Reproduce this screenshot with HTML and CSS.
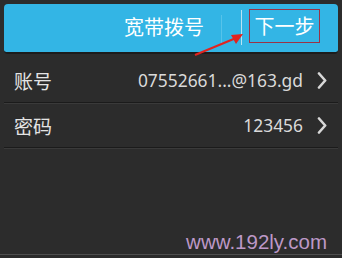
FILE: index.html
```html
<!DOCTYPE html>
<html lang="zh-CN">
<head>
<meta charset="utf-8">
<title>宽带拨号</title>
<link rel="stylesheet" href="styles.css">
</head>
<body>
<div class="screen">
  <header class="bar">
    <span class="title">宽带拨号</span>
    <span class="sep sep-faint"></span>
    <span class="sep sep-bright"></span>
    <span class="next">下一步</span>
  </header>
  <ul class="list">
    <li class="row">
      <span class="label">账号</span>
      <span class="value">07552661...@163.gd</span>
      <svg class="chev" width="10" height="17" viewBox="0 0 10 17"><path d="M2 1.5 L8.2 8.5 L2 15.5" fill="none" stroke="#d8d8d8" stroke-width="2.6" stroke-linecap="round" stroke-linejoin="round"/></svg>
    </li>
    <li class="row">
      <span class="label">密码</span>
      <span class="value">123456</span>
      <svg class="chev" width="10" height="17" viewBox="0 0 10 17"><path d="M2 1.5 L8.2 8.5 L2 15.5" fill="none" stroke="#d8d8d8" stroke-width="2.6" stroke-linecap="round" stroke-linejoin="round"/></svg>
    </li>
  </ul>
  <svg class="arrow" width="342" height="258" viewBox="0 0 342 258">
    <line x1="195" y1="55" x2="236" y2="38" stroke="#e2231f" stroke-width="2"/>
    <polygon points="243,34 231,35 236,44" fill="#e2231f"/>
  </svg>
  <div class="watermark">www.192ly.com</div>
</div>
</body>
</html>
```
FILE: styles.css
```css
html, body {
  margin: 0;
  padding: 0;
  background: #2b2b2b;
}
.screen {
  position: relative;
  width: 342px;
  height: 255px;
  box-sizing: border-box;
  padding: 4px 4px 0;
  background: #2c2c2c;
  border-bottom: 1px solid #4e4e4e;
  font-family: "Noto Sans", "Noto Sans CJK SC", sans-serif;
  overflow: hidden;
}
.bar {
  height: 48px;
  background: #33b5e5;
  border-radius: 4px;
  border-bottom: 2px solid #1c1c1c;
  display: flex;
  align-items: center;
  justify-content: flex-end;
  padding-right: 18px;
}
.title {
  font-family: "Noto Sans CJK SC", sans-serif;
  font-size: 20px;
  color: #ffffff;
  margin-right: 17px;
  line-height: 1;
  margin-top: -2px;
}
.sep {
  width: 1px;
  align-self: flex-start;
}
.sep-faint {
  height: 30px;
  margin-top: 11px;
  background: #56c3ea;
  margin-right: 19px;
}
.sep-bright {
  height: 35px;
  margin-top: 6px;
  background: #b9e4f4;
  margin-right: 7px;
}
.next {
  box-sizing: border-box;
  width: 71px;
  height: 34px;
  border: 1px solid #9a3346;
  font-family: "Noto Sans CJK SC", sans-serif;
  font-size: 20px;
  color: #ffffff;
  display: flex;
  align-items: center;
  justify-content: center;
  margin-top: -5px;
}
.list {
  list-style: none;
  margin: 4px 0 0;
  padding: 0;
}
.row {
  height: 44px;
  display: flex;
  align-items: center;
  padding: 0 11px 0 10px;
  border-bottom: 1px solid #1b1b1b;
  box-shadow: 0 1px 0 #3a3a3a;
}
.label {
  font-family: "Noto Sans CJK SC", sans-serif;
  font-size: 19px;
  color: #e4e4e4;
  flex: 1;
}
.value {
  font-size: 17.4px;
  color: #dadada;
  margin-right: 14px;
}
.chev {
  display: block;
}
.arrow {
  position: absolute;
  left: 0;
  top: 0;
  pointer-events: none;
}
.watermark {
  position: absolute;
  right: 15px;
  bottom: 0;
  font-family: "Liberation Sans", Arial, sans-serif;
  font-size: 20.5px;
  color: #bd98c7;
  line-height: 24px;
}
```
